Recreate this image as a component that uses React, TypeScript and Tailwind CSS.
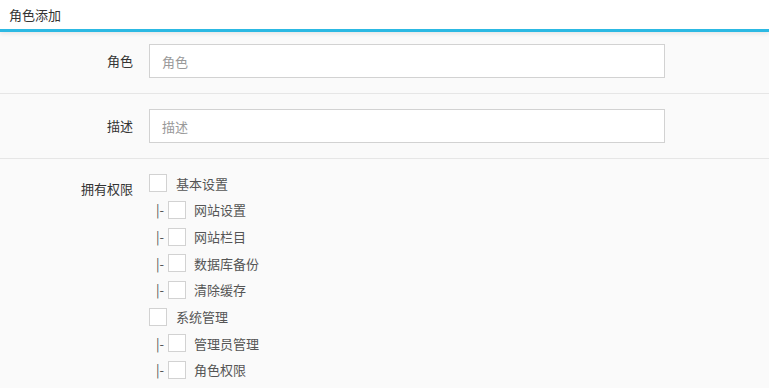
import React from 'react';

interface PermNode {
  name: string;
  children?: string[];
}

const perms: PermNode[] = [
  { name: '基本设置', children: ['网站设置', '网站栏目', '数据库备份', '清除缓存'] },
  { name: '系统管理', children: ['管理员管理', '角色权限'] },
];

const Box: React.FC = () => (
  <span className="inline-block w-[18px] h-[18px] border border-[#d2d2d2] bg-white shrink-0" />
);

const App: React.FC = () => {
  return (
    <div
      className="min-h-screen bg-[#fafafa] text-[13px] text-[#333]"
      style={{ fontFamily: '"Noto Sans CJK SC", "Noto Sans", sans-serif' }}
    >
      {/* Header */}
      <div className="relative z-10 h-[32px] bg-white border-b-[3px] border-[#2cb9e3] shadow-[0_2px_4px_rgba(0,0,0,0.08)] flex items-center pl-[9px]">
        <span className="text-[#333]">角色添加</span>
      </div>

      {/* Role */}
      <div className="flex items-center pt-[12px] pb-[15px] border-b border-[#e6e6e6]">
        <label className="w-[133px] text-right">角色</label>
        <input
          className="ml-4 w-[516px] h-[34px] border border-[#d2d2d2] bg-white pl-3 outline-none placeholder:text-[#999]"
          placeholder="角色"
        />
      </div>

      {/* Description */}
      <div className="flex items-center py-[15px] border-b border-[#e6e6e6]">
        <label className="w-[133px] text-right">描述</label>
        <input
          className="ml-4 w-[516px] h-[34px] border border-[#d2d2d2] bg-white pl-3 outline-none placeholder:text-[#999]"
          placeholder="描述"
        />
      </div>

      {/* Permissions */}
      <div className="flex pt-[11px]">
        <label className="w-[133px] text-right pt-[9px]">拥有权限</label>
        <div className="ml-4 flex flex-col text-[#555]">
          {perms.map((p) => (
            <React.Fragment key={p.name}>
              <div className="h-[26.7px] flex items-center gap-[9px]">
                <Box />
                <span>{p.name}</span>
              </div>
              {p.children?.map((c) => (
                <div key={c} className="h-[26.7px] flex items-center pl-[7px]">
                  <span className="text-[#555] w-[12px]">|-</span>
                  <Box />
                  <span className="ml-[8px]">{c}</span>
                </div>
              ))}
            </React.Fragment>
          ))}
        </div>
      </div>
    </div>
  );
};

export default App;
